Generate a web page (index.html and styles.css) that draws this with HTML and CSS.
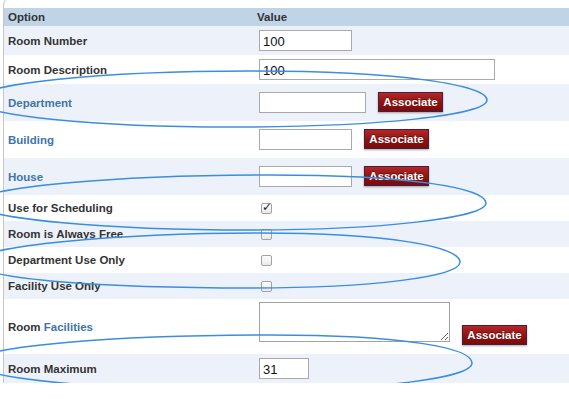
FILE: index.html
```html
<!DOCTYPE html>
<html lang="en">

<head>
    <meta charset="UTF-8">
    <title>Room Options</title>
    <link rel="stylesheet" href="styles.css">
</head>

<body>
    <div class="panel">
        <table class="options">
            <thead>
                <tr>
                    <th class="opt">Option</th>
                    <th>Value</th>
                </tr>
            </thead>
            <tbody>
                <tr class="alt">
                    <td>Room Number</td>
                    <td><div class="field"><input type="text" class="w-short" value="100"></div></td>
                </tr>
                <tr>
                    <td>Room Description</td>
                    <td><div class="field"><input type="text" class="w-long" value="100"></div></td>
                </tr>
                <tr class="alt">
                    <td><a href="#">Department</a></td>
                    <td><div class="field"><input type="text" class="w-mid"><button>Associate</button></div></td>
                </tr>
                <tr>
                    <td><a href="#">Building</a></td>
                    <td><div class="field"><input type="text" class="w-short"><button>Associate</button></div></td>
                </tr>
                <tr class="alt">
                    <td><a href="#">House</a></td>
                    <td><div class="field"><input type="text" class="w-short"><button>Associate</button></div></td>
                </tr>
                <tr class="check">
                    <td>Use for Scheduling</td>
                    <td><div class="field"><input type="checkbox" checked></div></td>
                </tr>
                <tr class="alt check">
                    <td>Room is Always Free</td>
                    <td><div class="field"><input type="checkbox"></div></td>
                </tr>
                <tr class="check">
                    <td>Department Use Only</td>
                    <td><div class="field"><input type="checkbox"></div></td>
                </tr>
                <tr class="alt check">
                    <td>Facility Use Only</td>
                    <td><div class="field"><input type="checkbox"></div></td>
                </tr>
                <tr>
                    <td>Room <a href="#">Facilities</a></td>
                    <td><div class="field bottom"><textarea></textarea><button>Associate</button></div></td>
                </tr>
                <tr class="alt">
                    <td>Room Maximum</td>
                    <td><div class="field"><input type="text" class="w-tiny" value="31"></div></td>
                </tr>
            </tbody>
        </table>
    </div>

    <!-- hand-drawn annotation rings -->
    <svg class="marks" width="569" height="399" viewBox="0 0 569 399">
        <path d="M -25 100 C -25 84, 100 71, 250 71 C 400 71, 487 85, 487 100 C 487 115, 380 127, 230 127 C 100 127, -25 116, -25 100 Z" />
        <path d="M -25 203 C -25 187, 120 175, 270 175 C 410 175, 486 188, 486 203 C 486 218, 380 230, 250 230 C 110 230, -25 219, -25 203 Z" />
        <path d="M -25 262 C -25 246, 120 233, 260 233 C 390 233, 460 247, 460 262 C 460 277, 370 288, 250 288 C 110 288, -25 280, -25 262 Z" />
        <path d="M -25 362 C -25 346, 120 335, 270 335 C 405 335, 472 348, 472 363 C 472 378, 380 390, 250 390 C 110 390, -25 380, -25 362 Z" />
    </svg>
</body>

</html>
```

FILE: styles.css
```css
body {
    margin: 0;
    font-family: "Liberation Sans", Arial, sans-serif;
    color: #333;
    background: #fff;
    position: relative;
    overflow: hidden;
}

.panel {
    margin: -6px 0 0 3px;
    padding-top: 13px;
    border-left: 1px solid #c6c6c6;
    border-top: 1px solid #c6c6c6;
    border-top-left-radius: 12px;
}

/* Options table */
.options {
    width: 100%;
    border-collapse: collapse;
    border-spacing: 0;
    font-size: 11.5px;
    font-weight: bold;
}

.options th {
    background: #c0d4e7;
    text-align: left;
    padding: 2px 3px;
    line-height: 14px;
}

.options th.opt {
    width: 243px;
    padding-left: 4px;
}

.options td {
    padding: 3px 3px;
    vertical-align: middle;
}

.options td:first-child {
    padding-left: 4px;
}

.options tr.alt td {
    background: #edf2fa;
}

.options tr.check td {
    height: 20px;
}

.options a {
    color: #4175aa;
    text-decoration: none;
}

.field {
    display: flex;
    align-items: center;
    gap: 12px;
    padding-left: 2px;
}

.field.bottom {
    align-items: flex-end;
}

/* Inputs */
input[type="text"] {
    box-sizing: border-box;
    height: 21px;
    margin: 1px 0;
    padding: 1px 3px 0;
    border: 1px solid #a9a9a9;
    font-family: "Liberation Sans", Arial, sans-serif;
    font-size: 13px;
    color: #111;
    background: #fff;
}

.w-tiny { width: 50px; }
.w-short { width: 93px; }
.w-mid { width: 107px; }
.w-long { width: 236px; }

textarea {
    box-sizing: border-box;
    width: 191px;
    height: 40px;
    margin: 0 0 9px;
    border: 1px solid #a3a3a3;
    resize: both;
}

input[type="checkbox"] {
    appearance: none;
    -webkit-appearance: none;
    box-sizing: border-box;
    width: 11px;
    height: 11px;
    margin: 0 0 0 2px;
    border: 1px solid #a2a2a2;
    border-radius: 2px;
    background: linear-gradient(#fdfdfd, #e9e9e9);
    position: relative;
}

input[type="checkbox"]:checked::after {
    content: "✓";
    position: absolute;
    left: 0;
    top: -4px;
    font-size: 12px;
    font-weight: bold;
    color: #222;
    font-family: "DejaVu Sans", sans-serif;
}

/* Red associate buttons */
button {
    box-sizing: border-box;
    height: 20px;
    width: 65px;
    margin: 5px 0 6px;
    padding: 0;
    border: 1px solid #45203e;
    background: linear-gradient(#b62626, #8e1212 55%, #7a0b0b);
    color: #fff;
    font-family: "Liberation Sans", Arial, sans-serif;
    font-size: 11.5px;
    font-weight: bold;
    text-shadow: 0 -1px 0 rgba(0, 0, 0, .4);
    box-shadow: 0 1px 2px rgba(0, 0, 0, .35);
    cursor: pointer;
}

/* Annotation overlay */
.marks {
    position: absolute;
    top: 0;
    left: 0;
    pointer-events: none;
}

.marks path {
    fill: none;
    stroke: #3a8ee0;
    stroke-width: 1.5;
}
```
